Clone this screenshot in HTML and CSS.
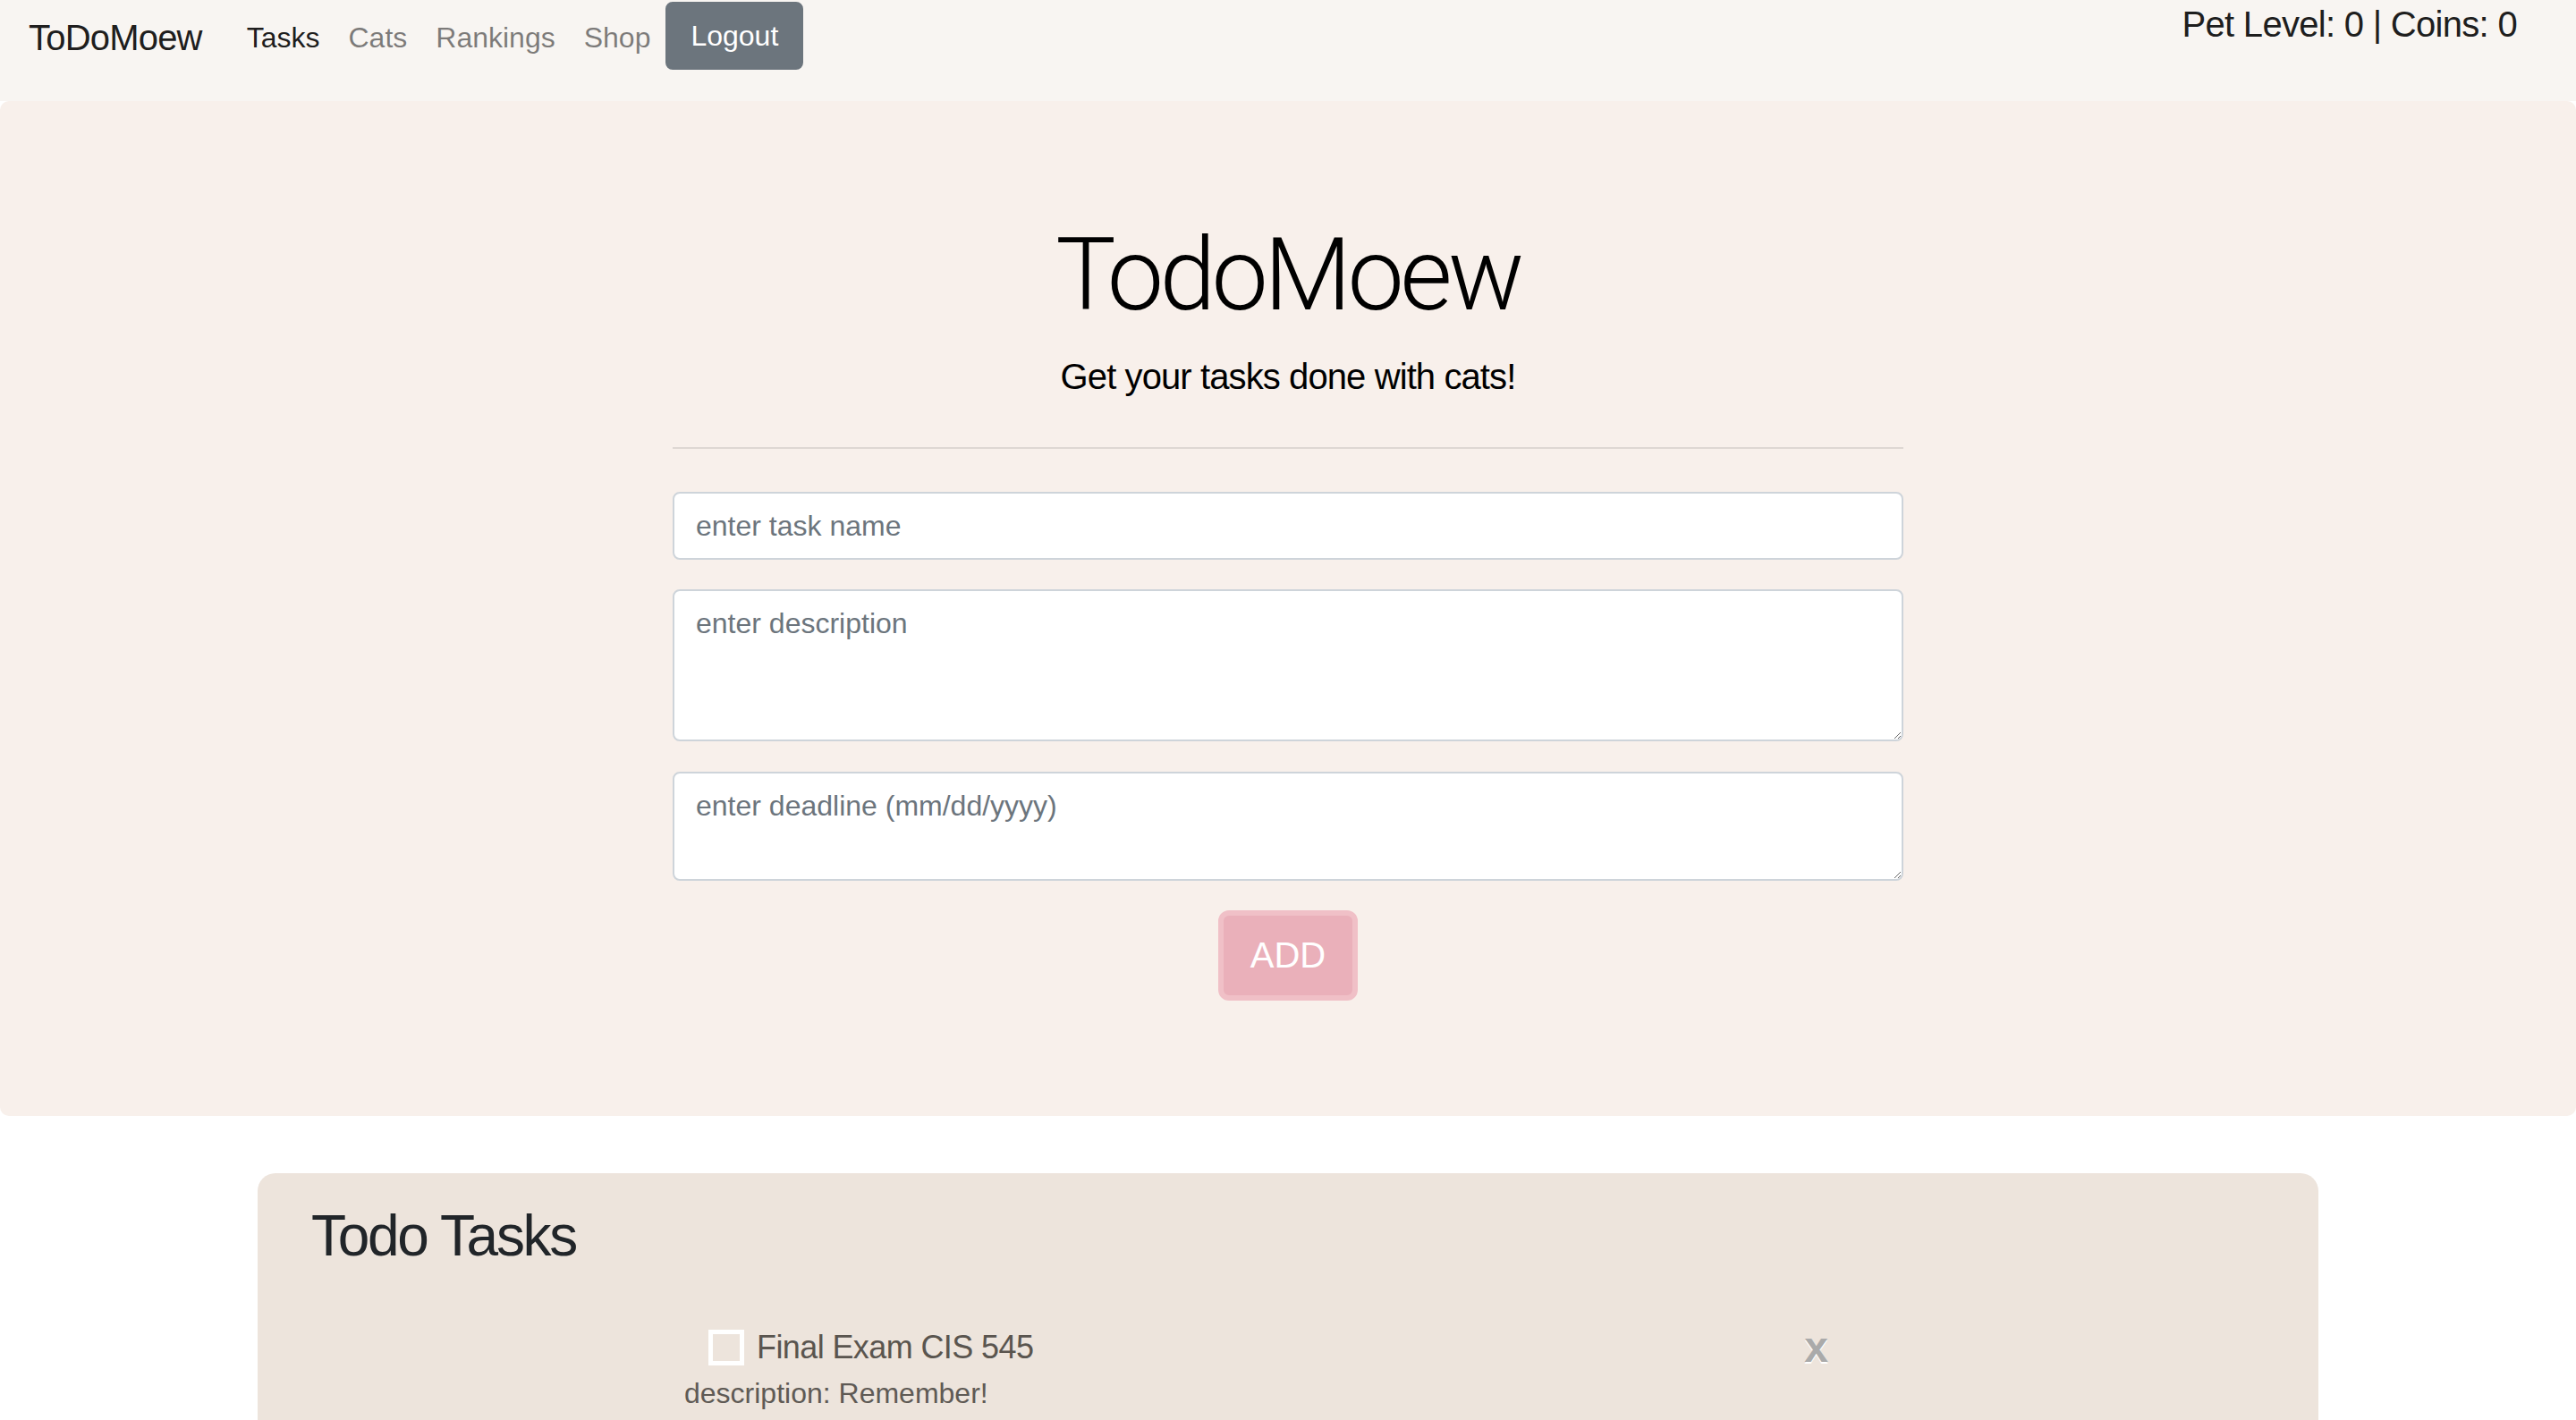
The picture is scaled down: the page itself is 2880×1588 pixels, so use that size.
FILE: index.html
```html
<!DOCTYPE html>
<html lang="en">
<head>
<meta charset="utf-8">
<title>ToDoMoew</title>
<link rel="stylesheet" href="styles.css">
</head>
<body>
<nav class="navbar">
  <a class="brand" href="#">ToDoMoew</a>
  <ul class="nav-links">
    <li><a class="nav-link active" href="#">Tasks</a></li>
    <li><a class="nav-link" href="#">Cats</a></li>
    <li><a class="nav-link" href="#">Rankings</a></li>
    <li><a class="nav-link" href="#">Shop</a></li>
  </ul>
  <button class="btn-logout" type="button">Logout</button>
  <div class="stats">Pet Level: 0 | Coins: 0</div>
</nav>

<section class="jumbotron">
  <h1 class="title">TodoMoew</h1>
  <p class="lead">Get your tasks done with cats!</p>
  <form class="task-form">
    <hr class="divider">
    <input class="field field-input" type="text" placeholder="enter task name">
    <textarea class="field field-desc" placeholder="enter description"></textarea>
    <textarea class="field field-date" placeholder="enter deadline (mm/dd/yyyy)"></textarea>
    <button class="btn-add" type="button">ADD</button>
  </form>
</section>

<section class="card">
  <h2 class="card-title">Todo Tasks</h2>
  <div class="task-list">
    <div class="task">
      <div class="task-row">
        <span class="checkbox"></span>
        <span class="task-name">Final Exam CIS 545</span>
        <span class="close">x</span>
      </div>
      <div class="task-desc">description: Remember!</div>
    </div>
  </div>
</section>
</body>
</html>
```

FILE: styles.css
```css
* { box-sizing: border-box; }

html, body {
  margin: 0;
  padding: 0;
}

body {
  font-family: "Liberation Sans", Arial, sans-serif;
  font-size: 32px;
  line-height: 1.5;
  color: #212529;
  background: #ffffff;
}

/* ---------- navbar ---------- */
.navbar {
  display: flex;
  align-items: flex-start;
  height: 113px;
  padding: 2px 66px 0 32px;
  background: #f8f5f2;
}

.brand {
  font-size: 40px;
  line-height: 60px;
  padding: 10px 0;
  margin-right: 34px;
  color: rgba(0, 0, 0, 0.9);
  text-decoration: none;
  letter-spacing: -0.8px;
}

.nav-links {
  display: flex;
  list-style: none;
  margin: 0;
  padding: 0;
}

.nav-link {
  display: block;
  padding: 16px 16px;
  font-size: 32px;
  line-height: 48px;
  color: rgba(0, 0, 0, 0.5);
  text-decoration: none;
}

.nav-link.active {
  color: rgba(0, 0, 0, 0.9);
}

.btn-logout {
  font-family: inherit;
  font-size: 32px;
  line-height: 48px;
  padding: 12px 26px;
  color: #ffffff;
  background: #6c757d;
  border: 2px solid #6c757d;
  border-radius: 8px;
  margin-left: 1px;
}

.stats {
  margin-left: auto;
  margin-top: 1px;
  font-size: 40px;
  line-height: 48px;
  color: #1e1e1e;
  letter-spacing: -0.7px;
}

/* ---------- jumbotron ---------- */
.jumbotron {
  background: #f8f0eb;
  padding: 128px 64px 129px;
  border-radius: 10px;
  margin-bottom: 64px;
  text-align: center;
}

.title {
  margin: 0 0 16px;
  font-family: Roboto, "Liberation Sans", sans-serif;
  font-size: 113px;
  line-height: 134px;
  font-weight: 300;
  color: #000000;
  letter-spacing: -4.6px;
}

.lead {
  margin: 0 0 49px;
  font-size: 40px;
  line-height: 60px;
  color: #000000;
  letter-spacing: -0.9px;
}

.task-form {
  width: 50%;
  margin: 0 auto;
  text-align: left;
}

.divider {
  margin: 0 0 48px;
  border: 0;
  border-top: 2px solid rgba(0, 0, 0, 0.1);
  height: 0;
}

.field {
  display: block;
  width: 100%;
  font-family: inherit;
  font-size: 32px;
  line-height: 48px;
  color: #495057;
  padding: 12px 24px;
  background: #ffffff;
  border: 2px solid #ced4da;
  border-radius: 8px;
}

.field::placeholder {
  color: #6c757d;
}

.field-input {
  height: 76px;
  margin-bottom: 33px;
}

.field-desc {
  height: 170px;
  margin-bottom: 34px;
}

.field-date {
  height: 122px;
  margin-bottom: 33px;
}

.btn-add {
  display: block;
  margin: 0 auto;
  width: 156px;
  height: 101px;
  font-family: inherit;
  font-size: 40px;
  color: #ffffff;
  background: #eab0ba;
  border: 6px solid #f0c0c7;
  border-radius: 12px;
  padding: 0;
}

/* ---------- card ---------- */
.card {
  width: 2304px;
  margin: 0 auto;
  background: #ede4dc;
  border-radius: 20px;
  padding: 32px 60px 200px;
}

.card-title {
  margin: 0 0 59px;
  font-size: 64px;
  line-height: 77px;
  font-weight: 400;
  color: #212529;
  letter-spacing: -2.3px;
}

.task-list {
  width: 1376px;
  margin: 0 auto;
  padding: 0 84px 0 13px;
}

.task-row {
  display: flex;
  align-items: center;
  height: 54px;
}

.checkbox {
  width: 40px;
  height: 40px;
  margin-left: 27px;
  margin-right: 14px;
  border: 5px solid #ffffff;
  flex-shrink: 0;
}

.task-name {
  flex: 1;
  font-size: 36px;
  line-height: 54px;
  color: #5a554f;
  letter-spacing: -0.6px;
}

.close {
  font-size: 48px;
  line-height: 1;
  font-weight: 700;
  color: #aaaaaa;
  text-shadow: 0 2px 0 #ffffff;
}

.task-desc {
  font-size: 32px;
  line-height: 48px;
  color: #5f5a55;
}
```
